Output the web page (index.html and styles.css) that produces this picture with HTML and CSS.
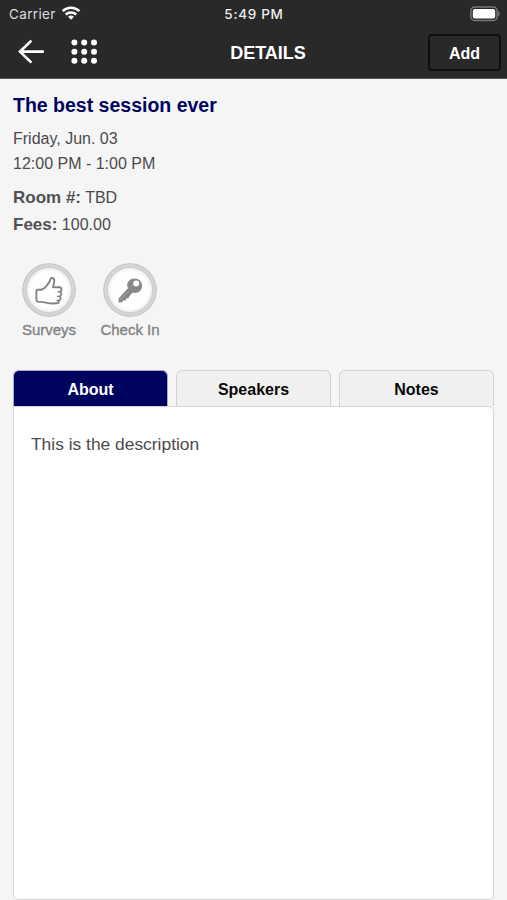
FILE: index.html
```html
<!DOCTYPE html>
<html lang="en">
<head>
<meta charset="utf-8">
<title>Details</title>
<link rel="stylesheet" href="styles.css">
</head>
<body>
<header class="header">
  <div class="status">
    <div class="carrier"><span>Carrier</span>
      <svg class="wifi" width="20" height="15" viewBox="0 0 20 15" fill="none" stroke="#fff" stroke-width="2.5"><path d="M1.7 5.2C6.4.7 13.6.7 18.3 5.2M4.7 8.5C7.7 5.7 12.3 5.7 15.3 8.5"/><path d="M7 10.7Q10 8.4 13 10.7L10 13.8Z" fill="#fff" stroke="none"/></svg>
    </div>
    <div class="time">5:49 PM</div>
    <svg class="battery" width="32" height="16" viewBox="0 0 32 16"><rect x="1.8" y="1" width="26.4" height="13.5" rx="4" fill="#29292a" stroke="#77777a" stroke-width="1.5"/><rect x="3.8" y="3" width="22.4" height="9.5" rx="2" fill="#fff"/><path d="M29.4 5Q32 7.7 29.4 10.4Z" fill="#88888a"/></svg>
  </div>
  <nav class="nav">
    <div class="nav-icons">
      <svg width="28" height="26" viewBox="0 0 28 26" fill="none" stroke="#fff" stroke-width="2.7"><path d="M14.4 1.6L3 12.6 14.4 23.6M3.3 12.6H26.8"/></svg>
      <svg width="28" height="26" viewBox="0 0 28 26" fill="#fff"><circle cx="4.4" cy="3.6" r="3"/><circle cx="14.2" cy="3.6" r="3"/><circle cx="24" cy="3.6" r="3"/><circle cx="4.4" cy="12.7" r="3"/><circle cx="14.2" cy="12.7" r="3"/><circle cx="24" cy="12.7" r="3"/><circle cx="4.4" cy="21.8" r="3"/><circle cx="14.2" cy="21.8" r="3"/><circle cx="24" cy="21.8" r="3"/></svg>
    </div>
    <h1 class="nav-title">DETAILS</h1>
    <button class="add">Add</button>
  </nav>
</header>
<main class="content">
  <h2 class="title">The best session ever</h2>
  <div class="when"><p>Friday, Jun. 03</p><p>12:00 PM - 1:00 PM</p></div>
  <div class="facts"><p><b>Room #:</b> TBD</p><p><b>Fees:</b> 100.00</p></div>
  <div class="actions">
    <div class="action">
      <div class="disc"><svg width="54" height="54" viewBox="0 0 54 54" fill="none" stroke="#848486" stroke-width="1.9" stroke-linejoin="round"><path d="M15.4 26.8H19.4Q23 25.6 25.6 21.6Q28 18.4 28.6 16Q29.2 14.2 31 15.1Q33 16.4 32 20.2L31 24.2H37.4Q39.6 24.4 39.5 26.4Q39.4 28.2 38.2 28.8Q39.7 29.8 39.2 31.5Q38.8 33 37.8 33.4Q39 34.4 38.4 36Q37.9 37.2 36.9 37.5Q37.4 40.2 34.6 40.3Q27 40.8 22.5 39.4L15.6 38.6Q14.4 38.3 14.4 36.8V28Q14.4 26.8 15.4 26.8Z"/><path d="M35.4 28.8H38.2M35 33.4H37.8M34.4 37.5H36.9" stroke-width="1.4"/></svg></div>
      <span>Surveys</span>
    </div>
    <div class="action">
      <div class="disc"><svg width="54" height="54" viewBox="0 0 54 54"><path fill="#88888a" fill-rule="evenodd" d="M25 25.2C22.5 20 26.3 15.6 31.4 15.5C36 15.5 39.4 19 39 23.5C38.5 28.3 34.1 31 29.8 29.5L26 33.5 25.7 35.3 23 35.5 22.8 37.5 20.2 37.5 19.3 39.3 15.3 39.5 15.9 34.9ZM33.2 17.6A3 3 0 1 0 33.2 23.6A3 3 0 1 0 33.2 17.6Z"/><path d="M17 36.8L25.5 28.2" stroke="#b5b5b7" stroke-width=".7"/></svg></div>
      <span>Check In</span>
    </div>
  </div>
  <div class="tabs"><div class="tab active">About</div><div class="tab">Speakers</div><div class="tab">Notes</div></div>
  <section class="panel">This is the description</section>
</main>
</body>
</html>
```
FILE: styles.css
```css
* { box-sizing: border-box; }
body { margin: 0; height: 900px; display: flex; flex-direction: column; background: #f5f5f5; color: #4b4b4d; font-family: "Liberation Sans", Arial, sans-serif; font-size: 16px; overflow: hidden; }
h1, h2, p { margin: 0; }
.header { height: 79px; flex: none; background: #29292a; color: #fff; border-bottom: 1px solid #555; }
.status { height: 28px; display: grid; grid-template-columns: 1fr auto 1fr; align-items: center; padding: 0 6px 0 8px; font-family: Inter, sans-serif; font-size: 13.5px; line-height: 28px; }
.carrier { display: flex; align-items: center; gap: 6px; color: #dededf; letter-spacing: .35px; margin-left: 1px; }
.wifi { margin: -1px 0 0 -1px; }
.time { font-weight: 500; color: #ececec; letter-spacing: .7px; margin-left: -1px; }
.battery { justify-self: end; margin-top: -1px; }
.nav { height: 50px; display: grid; grid-template-columns: 1fr auto 1fr; align-items: center; padding: 0 6px 2px 17px; }
.nav-icons { display: flex; gap: 25px; }
.nav-title { font-size: 18px; line-height: 24px; margin: 1px 0 0 18px; }
.add { justify-self: end; width: 73px; height: 37px; margin-top: 1px; padding: 2px 0 0; border: 2px solid #0f0f0f; border-radius: 4px; background: #29292a; color: #fff; font: bold 16px "Liberation Sans", Arial, sans-serif; }
.content { flex: 1; display: flex; flex-direction: column; padding: 14px 13px 0 13px; }
.title { color: #00045f; font-size: 19.5px; line-height: 24px; }
.when { margin-top: 9px; line-height: 25px; }
.facts { margin-top: 8px; line-height: 27px; }
.facts b { font-size: 17px; color: #505052; }
.actions { display: flex; gap: 9px; margin: 25px 0 0; }
.action { width: 72px; display: flex; flex-direction: column; align-items: center; font-size: 15px; line-height: 20px; color: #828284; -webkit-text-stroke: .35px #828284; white-space: nowrap; }
.disc { width: 54px; height: 54px; margin-bottom: 3px; border-radius: 50%; background: radial-gradient(circle, #fff 0 18px, #f1f1f2 21.5px, #cfcfd1 22.5px, #d8d8da 25px, #c4c4c6 26.3px, #dfdfe0 27px); }
.disc svg { display: block; }
.tabs { display: flex; gap: 8px; margin-top: 30px; }
.tab { flex: 1; height: 36px; border: 1px solid #d4d4d5; border-bottom: 0; border-radius: 6px 6px 0 0; background: #f0f0f0; color: #080808; text-align: center; font-weight: bold; line-height: 38px; }
.tab.active { background: #00045f; border-color: #a7a8c8; color: #fff; }
.panel { flex: 1; border: 1px solid #d4d4d5; border-radius: 0 5px 5px 5px; background: #fff; padding: 25px 17px; font-size: 17.4px; line-height: 25px; }
```
